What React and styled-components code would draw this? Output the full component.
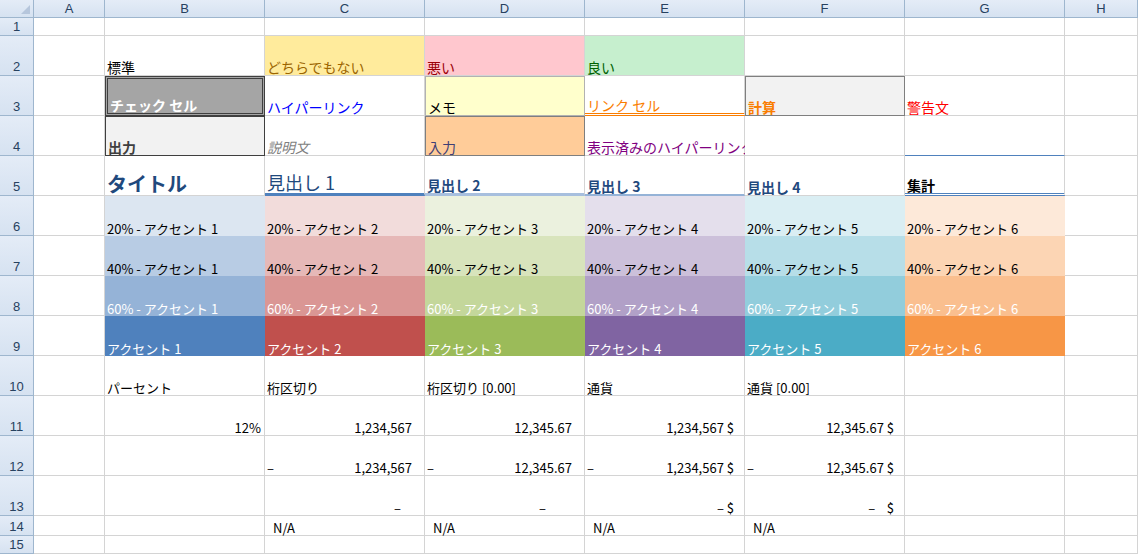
import React from "react";
import styled, { createGlobalStyle } from "styled-components";

const Global = createGlobalStyle`
  body { margin: 0; background: #fff; font-family: "Noto Sans CJK JP", "Noto Sans", sans-serif; }
`;

const COLS = ["A", "B", "C", "D", "E", "F", "G", "H"];
const ROWH = [18, 40, 40, 40, 40, 40, 40, 40, 40, 40, 40, 40, 40, 20, 18];

const Sheet = styled.div`
  display: grid;
  grid-template-columns: 34px 71px repeat(6, 160px) 73px;
  grid-template-rows: 18px ${ROWH.map((h) => h + "px").join(" ")};
  width: 1138px;
  height: 554px;
  overflow: hidden;
`;

const Head = styled.div`
  background: linear-gradient(#e4ecf7, #d6e2f1);
  border-right: 1px solid #9eb6ce;
  border-bottom: 1px solid #9eb6ce;
  color: #27415f;
  font-family: "Liberation Sans", sans-serif;
  font-size: 13px;
  display: flex;
  align-items: ${({ $row }) => ($row ? "flex-end" : "center")};
  justify-content: center;
  padding-bottom: ${({ $row }) => ($row ? "1px" : "0")};
  box-sizing: border-box;
`;

const Corner = styled(Head)`
  position: relative;
  &::after {
    content: "";
    position: absolute;
    right: 3px;
    bottom: 3px;
    border-left: 9px solid transparent;
    border-bottom: 9px solid #b6c6dc;
  }
`;

const Cell = styled.div`
  box-sizing: border-box;
  border-right: 1px solid #d4d4d4;
  border-bottom: 1px solid #d4d4d4;
  background: ${({ $bg }) => $bg || "#fff"};
  color: ${({ $c }) => $c || "#000"};
  font-size: ${({ $fs }) => $fs || 14}px;
  font-weight: ${({ $b }) => ($b ? 700 : 400)};
  font-style: ${({ $i }) => ($i ? "italic" : "normal")};
  display: flex;
  align-items: flex-end;
  justify-content: ${({ $j }) => $j || "flex-start"};
  padding: 0 ${({ $pr }) => $pr ?? 3}px 0 2px;
  white-space: nowrap;
  overflow: visible;
  line-height: 1.1;
  ${({ $box }) => $box && `border: 1px solid ${$box};`}
  ${({ $dbl }) => $dbl && `border: 3px double ${$dbl};`}
  ${({ $bb }) => $bb && `border-bottom: ${$bb};`}
`;

const accents = [
  ["#dce6f1", "#b8cce4", "#95b3d7", "#4f81bd"],
  ["#f2dcdb", "#e6b8b7", "#da9694", "#c0504d"],
  ["#ebf1de", "#d8e4bc", "#c4d79b", "#9bbb59"],
  ["#e4dfec", "#ccc0da", "#b1a0c7", "#8064a2"],
  ["#daeef3", "#b7dee8", "#92cddc", "#4bacc6"],
  ["#fde9d9", "#fcd5b4", "#fabf8f", "#f79646"],
];

const H1 = "#1f497d";

const rows = {
  2: [
    { t: "標準" },
    { t: "どちらでもない", $bg: "#ffeb9c", $c: "#9c6500" },
    { t: "悪い", $bg: "#ffc7ce", $c: "#9c0006" },
    { t: "良い", $bg: "#c6efce", $c: "#006100" },
    {}, {},
  ],
  3: [
    { t: "チェック セル", $bg: "#a5a5a5", $c: "#fff", $b: 1, $dbl: "#3f3f3f" },
    { t: "ハイパーリンク", $c: "#0000ff" },
    { t: "メモ", $bg: "#ffffcc", $box: "#b2b2b2" },
    { t: "リンク セル", $c: "#fa7d00", $bb: "3px double #fa7d00" },
    { t: "計算", $bg: "#f2f2f2", $c: "#fa7d00", $b: 1, $box: "#7f7f7f" },
    { t: "警告文", $c: "#ff0000" },
  ],
  4: [
    { t: "出力", $bg: "#f2f2f2", $c: "#3f3f3f", $b: 1, $box: "#3f3f3f" },
    { t: "説明文", $c: "#7f7f7f", $i: 1 },
    { t: "入力", $bg: "#ffcc99", $c: "#3f3f76", $box: "#7f7f7f" },
    { t: "表示済みのハイパーリンク", $c: "#800080" },
    {},
    { $bb: "1px solid #4f81bd" },
  ],
  5: [
    { t: "タイトル", $c: H1, $b: 1, $fs: 20, $bb: "1px solid #d4d4d4" },
    { t: "見出し 1", $c: H1, $fs: 18, $bb: "3px solid #4f81bd" },
    { t: "見出し 2", $c: H1, $b: 1, $fs: 14, $bb: "3px solid #a7bfde" },
    { t: "見出し 3", $c: H1, $b: 1, $fs: 14, $bb: "2px solid #95b3d7" },
    { t: "見出し 4", $c: H1, $b: 1, $fs: 14 },
    { t: "集計", $b: 1, $bb: "3px double #4f81bd" },
  ],
  10: [
    { t: "パーセント", $fs: 13 },
    { t: "桁区切り", $fs: 13 },
    { t: "桁区切り [0.00]", $fs: 13 },
    { t: "通貨", $fs: 13 },
    { t: "通貨 [0.00]", $fs: 13 },
    {},
  ],
  11: [
    { t: "12%", $j: "flex-end", $fs: 13 },
    { t: "1,234,567", $j: "flex-end", $pr: 12, $fs: 13 },
    { t: "12,345.67", $j: "flex-end", $pr: 12, $fs: 13 },
    { t: "1,234,567 $", $j: "flex-end", $pr: 10, $fs: 13 },
    { t: "12,345.67 $", $j: "flex-end", $pr: 10, $fs: 13 },
    {},
  ],
  12: [
    {},
    { l: "–", t: "1,234,567", $j: "space-between", $pr: 12, $fs: 13 },
    { l: "–", t: "12,345.67", $j: "space-between", $pr: 12, $fs: 13 },
    { l: "–", t: "1,234,567 $", $j: "space-between", $pr: 10, $fs: 13 },
    { l: "–", t: "12,345.67 $", $j: "space-between", $pr: 10, $fs: 13 },
    {},
  ],
  13: [
    {},
    { t: "–", $j: "flex-end", $pr: 23, $fs: 13 },
    { t: "–", $j: "flex-end", $pr: 38, $fs: 13 },
    { t: "– $", $j: "flex-end", $pr: 10, $fs: 13 },
    { t: "–\u00a0\u00a0\u00a0\u00a0$", $j: "flex-end", $pr: 10, $fs: 13 },
    {},
  ],
  14: [
    {},
    { t: "N/A", $fs: 13, style: { paddingLeft: 8 } },
    { t: "N/A", $fs: 13, style: { paddingLeft: 8 } },
    { t: "N/A", $fs: 13, style: { paddingLeft: 8 } },
    { t: "N/A", $fs: 13, style: { paddingLeft: 8 } },
    {},
  ],
};

[6, 7, 8, 9].forEach((r, k) => {
  const label = ["20% - ", "40% - ", "60% - ", ""][k];
  rows[r] = accents.map((a, i) => ({
    t: `${label}アクセント ${i + 1}`,
    $bg: a[k],
    $c: k >= 2 ? "#fff" : "#000",
    $fs: 13,
    $bb: "none",
    style: { borderRight: "none" },
  }));
});

function renderCell(c, key) {
  const { t, l, style, ...p } = c;
  return (
    <Cell key={key} {...p} style={style}>
      {l !== undefined && <span>{l}</span>}
      {t && <span>{t}</span>}
    </Cell>
  );
}

export default function App() {
  const out = [<Corner key="corner" />];
  COLS.forEach((c) => out.push(<Head key={"h" + c}>{c}</Head>));
  ROWH.forEach((_, idx) => {
    const r = idx + 1;
    out.push(<Head $row key={"r" + r}>{r}</Head>);
    out.push(<Cell key={r + "A"} />);
    const cells = rows[r] || [{}, {}, {}, {}, {}, {}];
    cells.forEach((c, i) => out.push(renderCell(c, r + "-" + i)));
    out.push(<Cell key={r + "H"} />);
  });
  return (
    <>
      <Global />
      <Sheet>{out}</Sheet>
    </>
  );
}
